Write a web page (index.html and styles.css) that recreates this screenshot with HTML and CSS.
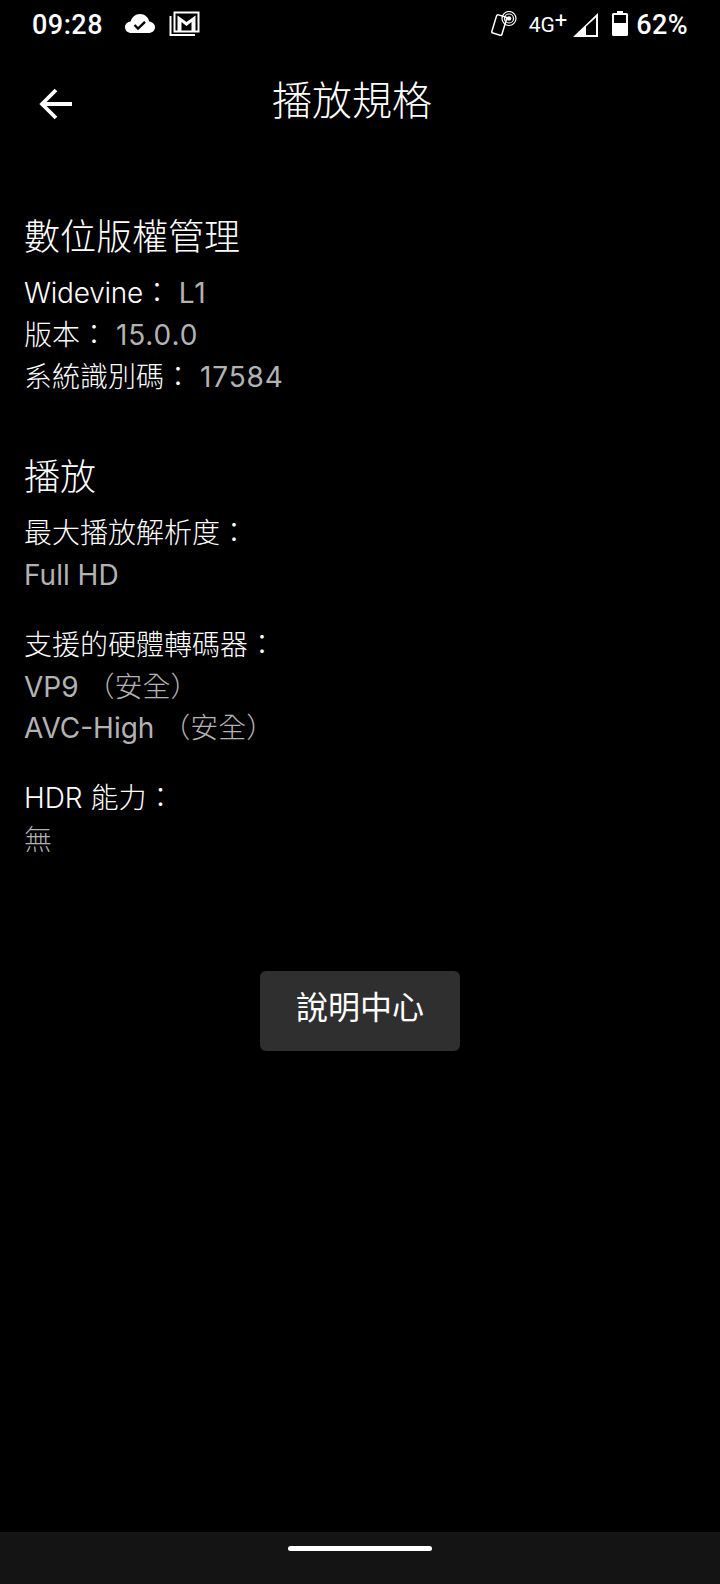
FILE: index.html
```html
<!DOCTYPE html>
<html lang="zh-Hant">
<head>
<meta charset="utf-8">
<title>播放規格</title>
<link rel="stylesheet" href="styles.css">
</head>
<body>
<div class="screen">
  <header class="status">
    <div class="status-left">
      <span class="time">09:28</span>
      <svg class="ic-cloud" viewBox="0 0 30 19"><path fill="#fff" d="M6.500 19C2.800 19 0 16.500 0 13.200C0 10.200 2.400 7.800 5.500 7.500C7 3 10.500 0 15 0C19.800 0 23.300 3.300 24.300 7.500C27.500 8 30 10.200 30 13.200C30 16.500 27.200 19 23.500 19Z"/><path fill="none" stroke="#000" stroke-width="2.400" d="M9.500 11L13 14.500L20 7.800"/></svg>
      <svg class="ic-mail" viewBox="0 0 31 26"><path fill="none" stroke="#fff" stroke-width="2" d="M1.500 5V24H26"/><rect x="5.500" y="1.500" width="24" height="19" fill="#000" stroke="#fff" stroke-width="2"/><path fill="#fff" d="M8.500 4.500L17.500 11L26.500 4.500V20H22.500V11L17.500 15L12.500 11V20H8.500Z"/></svg>
    </div>
    <div class="status-right">
      <svg class="ic-nfc" viewBox="0 0 27 25"><rect x="3" y="4.500" width="10.500" height="19" rx="1.500" transform="rotate(17 8 14)" fill="#000" stroke="#fff" stroke-width="1.500"/><circle cx="18" cy="7.500" r="2.200" fill="#fff"/><circle cx="18" cy="7.500" r="4.500" fill="none" stroke="#fff" stroke-width="1.200"/><circle cx="18" cy="7.500" r="7" fill="none" stroke="#fff" stroke-width="1.200"/></svg>
      <span class="net">4G<span class="plus">+</span></span>
      <svg class="ic-signal" viewBox="0 0 26 24"><path fill="#fff" d="M0 24L25 0V24Z"/><path fill="#000" d="M13 13.500L23 4.500V22H13Z"/></svg>
      <svg class="ic-batt" viewBox="0 0 16 25"><path fill="#fff" d="M5 0H11V2H14.500Q16 2 16 3.500V23.500Q16 25 14.500 25H1.500Q0 25 0 23.500V3.500Q0 2 1.500 2H5Z"/><rect x="2" y="4" width="12" height="8" fill="#000"/></svg>
      <span class="pct">62%</span>
    </div>
  </header>

  <nav class="appbar">
    <svg class="ic-back" viewBox="0 0 34 32"><path fill="none" stroke="#fff" stroke-width="3.800" d="M33 16H4M17 2L3 16L17 30"/></svg>
    <h1 class="title">播放規格</h1>
  </nav>

  <main class="content">
    <section class="group first">
      <h2 class="heading">數位版權管理</h2>
      <p class="line"><span class="wv">Widevine</span>： <span class="val lat num">L1</span></p>
      <p class="line">版本： <span class="val lat num">15.0.0</span></p>
      <p class="line">系統識別碼： <span class="val lat num">17584</span></p>
    </section>
    <section class="group second">
      <h2 class="heading">播放</h2>
      <div class="block">
        <p class="line">最大播放解析度：</p>
        <p class="line val lat">Full HD</p>
      </div>
      <div class="block">
        <p class="line">支援的硬體轉碼器：</p>
        <p class="line val"><span class="lat">VP9</span> （安全）</p>
        <p class="line val"><span class="lat">AVC-High</span> （安全）</p>
      </div>
      <div class="block">
        <p class="line">HDR 能力：</p>
        <p class="line val">無</p>
      </div>
    </section>
    <div class="actions"><button class="help">說明中心</button></div>
  </main>

  <footer class="navbar"><span class="pill"></span></footer>
</div>
</body>
</html>
```

FILE: styles.css
```css
html, body { margin: 0; padding: 0; background: #000; }
.screen {
  width: 720px; height: 1584px; display: flex; flex-direction: column;
  background: #000; color: #fff; overflow: hidden;
  font-family: Inter, "Noto Sans CJK TC", sans-serif;
}
.status { height: 50px; display: flex; justify-content: space-between; align-items: center; padding: 0 32px; flex: none; }
.status-left, .status-right { display: flex; align-items: center; }
.time { font: 500 27px Roboto, sans-serif; letter-spacing: .5px; margin-right: 22px; }
.ic-cloud { width: 30px; height: 19px; margin: 0 14px 4px 0; }
.ic-mail { width: 31px; height: 26px; margin-bottom: 3px; }
.ic-nfc { width: 27px; height: 25px; margin: 0 11px 3px 0; }
.net { font: 400 21px Roboto, sans-serif; margin-right: 6px; }
.plus { font-size: 22px; line-height: 0; position: relative; top: -4px; }
.ic-signal { width: 26px; height: 24px; margin: 0 13px 1px 0; }
.ic-batt { width: 16px; height: 25px; margin: 0 8px 3px 0; }
.pct { font: 500 27px Roboto, sans-serif; letter-spacing: .4px; }
.appbar { height: 100px; display: flex; align-items: center; flex: none; }
.ic-back { width: 34px; height: 32px; margin: 8px 0 0 39px; flex: none; }
.title { margin: 2px 0 0 199px; font-size: 40px; font-weight: 300; line-height: 50px; }
.content { flex: 1; padding: 0 24px; }
.group.first { padding-top: 62px; }
.group.second { padding-top: 54px; }
.heading { margin: 0 0 11px; font-size: 36px; font-weight: 300; line-height: 50px; }
.line { margin: 0; font-size: 28px; font-weight: 300; line-height: 41.750px; }
.lat { font-weight: 400; }
.val { color: #b3b3b3; }
.num { letter-spacing: .9px; }
.wv { letter-spacing: -.25px; }
.block + .block { margin-top: 28px; }
.actions { display: flex; justify-content: center; margin-top: 109px; }
.help { width: 200px; height: 80px; border: 0; border-radius: 6px; background: #2f2f2f; color: #fff; font: inherit; font-size: 32px; padding: 0 0 11px; }
.navbar { height: 52px; background: #141414; display: flex; justify-content: center; padding-top: 14px; box-sizing: border-box; flex: none; }
.pill { width: 144px; height: 5px; background: #fff; border-radius: 3px; }
```
